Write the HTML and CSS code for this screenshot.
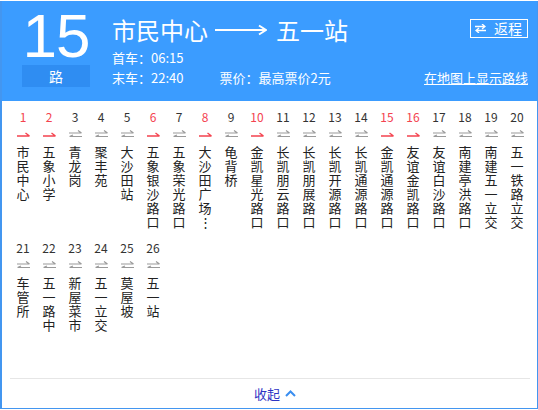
FILE: index.html
```html
<!DOCTYPE html>
<html lang="zh-CN">
<head>
<meta charset="utf-8">
<title>15路</title>
<link rel="stylesheet" href="styles.css">
</head>
<body>
<div class="card">
  <header class="head">
    <div class="line-no">
      <div class="big">15</div>
      <div class="lu">路</div>
    </div>
    <div class="info">
      <div class="title-row">
        <div class="title">
          <span>市民中心</span>
          <svg class="long-arrow" width="52" height="12" viewBox="0 0 52 12"><path d="M0 6H51" stroke="#fff" stroke-width="2"/><path d="M44 1.5L51 6L44 10.5" fill="none" stroke="#fff" stroke-width="2"/></svg>
          <span>五一站</span>
        </div>
        <div class="back-btn">
          <svg width="11" height="9" viewBox="0 0 11 9"><path d="M0 2.5H10M7 0L10 2.5L7 5" fill="none" stroke="#fff" stroke-width="1.3"/><path d="M11 6.5H1M4 4L1 6.5L4 9" fill="none" stroke="#fff" stroke-width="1.3"/></svg>
          <span>返程</span>
        </div>
      </div>
      <div class="meta">首车：06:15</div>
      <div class="meta meta-row">
        <span>末车：22:40</span>
        <span class="price">票价：最高票价2元</span>
        <a class="map-link" href="#">在地图上显示路线</a>
      </div>
    </div>
  </header>

  <div class="stops" id="stops"></div>

  <div class="foot">
    <span class="fold">收起</span>
    <svg class="chev" width="11" height="7" viewBox="0 0 11 7"><path d="M1 6L5.5 1.5L10 6" fill="none" stroke="#3a8ef0" stroke-width="2"/></svg>
  </div>
</div>
<script>
var stops = [
  ["市民中心",1],["五象小学",1],["青龙岗",0],["聚丰苑",0],["大沙田站",0],
  ["五象银沙路口",1],["五象荣光路口",0],["大沙田广场⋮",1],["龟背桥",0],["金凯星光路口",1],
  ["长凯朋云路口",0],["长凯朋展路口",0],["长凯开源路口",0],["长凯通源路口",0],["金凯通源路口",1],
  ["友谊金凯路口",1],["友谊白沙路口",0],["南建亭洪路口",0],["南建五一立交",0],["五一铁路立交",0],
  ["车管所",0],["五一路中",0],["新屋菜市",0],["五一立交",0],["莫屋坡",0],["五一站",0]
];
var red = '<svg width="13" height="6" viewBox="0 0 13 6"><path d="M0 5H12.5M8.5 2L12.5 5" fill="none" stroke="#f4434f" stroke-width="1.4"/></svg>';
var gray = '<svg width="13" height="8" viewBox="0 0 13 8"><path d="M0 3H12.5M9 0.5L12.5 3" fill="none" stroke="#9a9a9a" stroke-width="1.2"/><path d="M13 6.5H0.5M4 5L0.5 6.5" fill="none" stroke="#9a9a9a" stroke-width="1.2"/></svg>';
var html = '';
stops.forEach(function (s, i) {
  html += '<div class="stop' + (s[1] ? ' hot' : '') + '">' +
    '<div class="no">' + (i + 1) + '</div>' +
    '<div class="dir">' + (s[1] ? red : gray) + '</div>' +
    '<div class="name">' + s[0] + '</div></div>';
});
document.getElementById('stops').innerHTML = html;
</script>
</body>
</html>
```

FILE: styles.css
```css
html, body {
  margin: 0;
  padding: 0;
  background: #fff;
}
body {
  font-family: "Noto Sans CJK SC", "Noto Sans", sans-serif;
  color: #333;
}
.card {
  margin-top: 1px;
  width: 538px;
  height: 408px;
  box-sizing: border-box;
  border: 1px solid #4396f0;
  border-top: none;
  border-left-width: 2px;
  display: flex;
  flex-direction: column;
  overflow: hidden;
}
.head {
  height: 100px;
  flex: none;
  background: #3b9cff;
  color: #fff;
  display: flex;
  padding: 0 9px 0 20px;
}
.line-no {
  width: 68px;
  margin-top: 5px;
  flex: none;
}
.big {
  font-family: "Liberation Sans", Arial, sans-serif;
  font-size: 62px;
  line-height: 59px;
  height: 59px;
  text-align: center;
  letter-spacing: -1px;
}
.lu {
  height: 22px;
  line-height: 22px;
  background: #2f8df2;
  text-align: center;
  font-size: 14px;
}
.info {
  flex: 1;
  margin-left: 22px;
  margin-top: 14px;
}
.title-row {
  display: flex;
  justify-content: space-between;
  align-items: flex-start;
  height: 30px;
  margin-bottom: 3px;
}
.title {
  display: flex;
  align-items: center;
  font-size: 24px;
  line-height: 30px;
}
.long-arrow {
  margin: 0 9px 0 7px;
}
.back-btn {
  margin-top: 4px;
  height: 19px;
  box-sizing: border-box;
  border: 1px solid #fff;
  display: flex;
  align-items: center;
  gap: 8px;
  padding: 0 5px 0 4px;
  font-size: 14px;
  line-height: 17px;
}
.back-btn svg {
  display: block;
}
.meta {
  font-size: 13px;
  line-height: 20px;
}
.meta-row {
  display: flex;
}
.price {
  margin-left: 36px;
}
.map-link {
  margin-left: auto;
  color: #fff;
  text-decoration: underline;
}
.stops {
  flex: 1;
  padding: 9px 7px 0 8px;
  display: grid;
  grid-template-columns: repeat(20, 26px);
  grid-auto-rows: min-content;
  row-gap: 12px;
  align-content: start;
}
.stop {
  display: flex;
  flex-direction: column;
  align-items: center;
}
.no {
  font-size: 12px;
  line-height: 14px;
  color: #333;
}
.hot .no {
  color: #f4434f;
}
.dir {
  height: 21px;
  display: flex;
  align-items: center;
  padding-bottom: 2px;
  box-sizing: border-box;
}
.dir svg {
  display: block;
}
.name {
  width: 14px;
  font-size: 13px;
  line-height: 14px;
  text-align: center;
  word-break: break-all;
  color: #222;
}
.foot {
  height: 29px;
  flex: none;
  margin: 0 7px 0 8px;
  border-top: 1px solid #e6e6e6;
  display: flex;
  align-items: center;
  justify-content: center;
  gap: 5px;
  padding-left: 10px;
}
.fold {
  font-size: 13px;
  color: #2f35c4;
  line-height: 16px;
}
.chev {
  display: block;
}
```
